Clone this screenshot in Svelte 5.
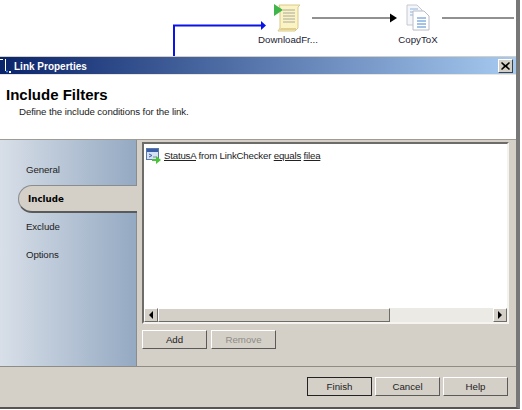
<script>
  let tabs = ['General', 'Include', 'Exclude', 'Options']
  let active = 'Include'
</script>

<div class="page">
  <div class="window">
    <div class="canvas">
      <svg class="wires" width="516" height="56" viewBox="0 0 516 56">
        <path d="M174 56V25.500H262" fill="none" stroke="#0a14e6" stroke-width="2" />
        <path d="M261 21l5 4.500-5 4.500z" fill="#0a14e6" />
        <path d="M312 18H391M442 18H514" stroke="#222" stroke-width="1" />
        <path d="M390 13.500l7 4.500-7 4.500z" fill="#000" />
        <!-- scroll with green play mark -->
        <path d="M279 5h21l-2 2v21l-3 3h-17l2-3V8z" fill="#fbf3c4" stroke="#d9c98a" />
        <path d="M281 28h15v2h-17z" fill="#e0cf8e" />
        <path d="M283 10h12M283 13h12M283 16h12M283 19h12M283 22h12" stroke="#a8a89a" />
        <path d="M274 4l9 6-9 6z" fill="#3fb54a" />
        <!-- copied documents -->
        <path d="M407 5h10l5 5v15h-15z" fill="#f4f6fa" stroke="#c4c8d0" />
        <path d="M410 9h8M410 12h8M410 15h8" stroke="#8fb4de" />
        <path d="M413 11h11l5 5v14h-16z" fill="#fff" stroke="#b8bcc6" />
        <path d="M417 18h9M417 21h9M417 24h9M417 27h9" stroke="#4a86cc" />
      </svg>
      <span class="node-label download">DownloadFr...</span>
      <span class="node-label copy">CopyToX</span>
    </div>

    <div class="dialog">
      <div class="titlebar">
        <svg class="title-icon" width="12" height="16" viewBox="0 0 12 16">
          <path d="M0 1.500H3M5.500 1V13" stroke="#fff" fill="none" />
          <path d="M6 13.500H8" stroke="#3d8be8" stroke-width="1.500" />
          <path d="M9 13h2v2H9z" fill="#fff" />
        </svg>
        <span>Link Properties</span>
        <button class="close" aria-label="Close">
          <svg width="9" height="8" viewBox="0 0 9 8"><path d="M1 0l3.500 3L8 0l1 1-3 3 3 3-1 1-3.500-3L1 8 0 7l3-3-3-3z" fill="#000" /></svg>
        </button>
      </div>

      <div class="header">
        <h1>Include Filters</h1>
        <p>Define the include conditions for the link.</p>
      </div>

      <div class="body">
        <nav class="nav">
          {#each tabs as tab}
            <div class="tab" class:active={tab === active}>{tab}</div>
          {/each}
        </nav>

        <div class="content">
          <div class="listbox">
            <div class="list">
              <div class="row">
                <svg width="15" height="16" viewBox="0 0 15 16">
                  <rect x="0.500" y="0.500" width="12" height="11" fill="#d6e2f4" stroke="#5a78a8" />
                  <rect x="1" y="1" width="11" height="3" fill="#3a5ea8" />
                  <path d="M3 6l3 1.500-3 1.500" fill="none" stroke="#3a5ea8" />
                  <path d="M7 9h3" stroke="#7a8ca8" />
                  <path d="M6 11h4V8l5 4-5 4v-3H6z" fill="#4cc23c" />
                </svg>
                <span><u>StatusA</u> from LinkChecker <u>equals</u> <u>filea</u></span>
              </div>
            </div>
            <div class="hscroll">
              <div class="sbtn"><i class="arrow left"></i></div>
              <div class="thumb"></div>
              <div class="track"></div>
              <div class="sbtn"><i class="arrow right"></i></div>
            </div>
          </div>
          <div class="actions">
            <button class="btn">Add</button>
            <button class="btn" disabled>Remove</button>
          </div>
        </div>
      </div>

      <div class="footer">
        <button class="btn default">Finish</button>
        <button class="btn">Cancel</button>
        <button class="btn">Help</button>
      </div>
    </div>
  </div>
</div>

<style>
  :global(body) {
    background: #fff;
  }

  .page {
    width: 522px;
    height: 410px;
    overflow: hidden;
    font-family: "Liberation Sans", Arial, sans-serif;
    font-size: 9.700px;
    color: #111;
  }

  .window {
    width: 516px;
    height: 407px;
    border-right: 4px solid #777;
    border-bottom: 2px solid #555;
    display: flex;
    flex-direction: column;
  }

  .canvas {
    position: relative;
    height: 56px;
    flex: none;
    background: #fff;
    border-bottom: 1px solid #d4d0c8;
  }

  .wires {
    position: absolute;
    left: 0;
    top: 0;
  }

  .node-label {
    position: absolute;
    top: 34px;
    transform: translateX(-50%);
    color: #223;
  }

  .download { left: 288px; }
  .copy { left: 418px; }

  .dialog {
    flex: 1;
    display: flex;
    flex-direction: column;
    min-height: 0;
    background: #d4d0c8;
  }

  .titlebar {
    position: relative;
    height: 17px;
    flex: none;
    display: flex;
    align-items: center;
    padding: 0 3px 0 14px;
    background: linear-gradient(to right, #0a246a, #a6caf0);
    border-bottom: 1px solid #e8e6df;
    color: #fff;
    font-weight: bold;
    font-size: 10px;
  }

  .titlebar span {
    padding-top: 2px;
  }

  .title-icon {
    position: absolute;
    left: 0;
    top: 1px;
  }

  .close {
    margin-left: auto;
    width: 15px;
    height: 14px;
    padding: 0;
    display: flex;
    align-items: center;
    justify-content: center;
    background: #d4d0c8;
    border: 1px solid;
    border-color: #fff #404040 #404040 #fff;
  }

  .header {
    height: 65px;
    flex: none;
    background: #fff;
    padding: 11px 0 0 6px;
    border-bottom: 1px solid #a09c94;
    box-sizing: border-box;
  }

  .header h1 {
    margin: 0;
    font-size: 15px;
    line-height: 18px;
    font-weight: bold;
    color: #000;
  }

  .header p {
    margin: 1px 0 0 13px;
    line-height: 14px;
    letter-spacing: -0.1px;
    color: #222;
  }

  .body {
    flex: 1;
    min-height: 0;
    display: flex;
    border-bottom: 1px solid #8e8c86;
  }

  .nav {
    width: 136px;
    flex: none;
    padding-top: 15px;
    background: linear-gradient(to right, #d8dfe8, #94a9c2);
    border-right: 1px solid #8a8c90;
    margin-right: -1px;
    box-sizing: content-box;
    display: flex;
    flex-direction: column;
    position: relative;
    z-index: 1;
  }

  .tab {
    height: 28px;
    margin-left: 26px;
    display: flex;
    align-items: center;
    letter-spacing: -0.1px;
    color: #222;
  }

  .tab.active {
    margin: 2px -1px -1px 18px;
    padding-left: 9px;
    background: #d4d0c8;
    border-radius: 14px 0 0 14px;
    border: 1px solid #8a8c90;
    border-bottom: 2px solid #5a5a5a;
    border-right: 0;
    box-sizing: border-box;
    font-family: "DejaVu Sans", sans-serif;
    font-size: 8.700px;
    font-weight: bold;
    letter-spacing: 0;
    color: #000;
  }

  .content {
    flex: 1;
    min-width: 0;
    padding: 2px 7px 0 6px;
    display: flex;
    flex-direction: column;
    gap: 6px;
  }

  .listbox {
    height: 182px;
    flex: none;
    box-sizing: border-box;
    display: flex;
    flex-direction: column;
    border: 2px solid;
    border-color: #6e6c68 #f4f3ef #f4f3ef #6e6c68;
    background: #fff;
  }

  .list {
    flex: 1;
    padding: 4px 0 0 2px;
  }

  .row {
    display: flex;
    align-items: flex-start;
    gap: 3px;
    line-height: 15px;
    letter-spacing: -0.2px;
    color: #222;
  }

  .hscroll {
    height: 14px;
    flex: none;
    display: flex;
    background: #eceae5;
  }

  .sbtn {
    width: 14px;
    box-sizing: border-box;
    display: flex;
    align-items: center;
    justify-content: center;
    background: #d4d0c8;
    border: 1px solid;
    border-color: #fff #6e6c68 #6e6c68 #fff;
  }

  .thumb {
    width: 230px;
    background: #d4d0c8;
    border: 1px solid;
    border-color: #fff #6e6c68 #6e6c68 #fff;
  }

  .track {
    flex: 1;
  }

  .arrow {
    width: 0;
    height: 0;
    border: 4px solid transparent;
  }

  .arrow.left {
    border-right-color: #000;
    border-left-width: 0;
  }

  .arrow.right {
    border-left-color: #000;
    border-right-width: 0;
  }

  .actions {
    display: flex;
    gap: 4px;
  }

  .btn {
    width: 65px;
    height: 19px;
    padding: 0;
    font: inherit;
    color: #222;
    background: #d4d0c8;
    border: 1px solid;
    border-color: #fff #5a5a58 #5a5a58 #fff;
  }

  .btn:disabled {
    color: #8e8c86;
  }

  .btn.default {
    border-color: #222;
  }

  .footer {
    height: 40px;
    flex: none;
    box-sizing: border-box;
    display: flex;
    justify-content: flex-end;
    align-items: flex-start;
    gap: 3px;
    padding: 10px 8px 0 0;
  }
</style>
